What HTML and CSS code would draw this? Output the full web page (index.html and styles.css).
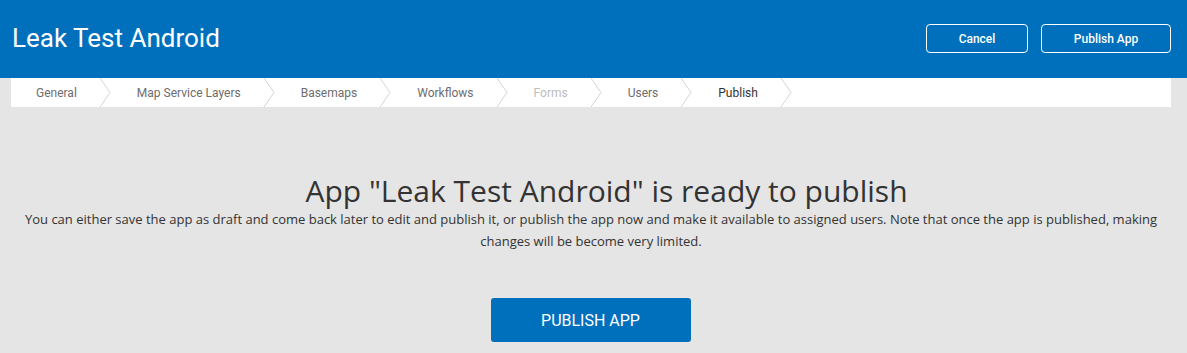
FILE: index.html
```html
<!DOCTYPE html>
<html>
<head>
<meta charset="utf-8">
<link rel="stylesheet" href="styles.css">
</head>
<body>
<header class="topbar">
  <h1 class="app-title">Leak Test Android</h1>
  <div class="top-actions">
    <button class="btn-outline btn-cancel">Cancel</button>
    <button class="btn-outline btn-publish">Publish App</button>
  </div>
</header>
<nav class="steps">
  <div class="step"><span class="step-label">General</span><svg class="chev" width="12" height="29" viewBox="0 0 12 29"><polyline points="1,0 11,14.5 1,29" fill="none" stroke="#d4d4d4" stroke-width="1"/></svg></div>
  <div class="step"><span class="step-label">Map Service Layers</span><svg class="chev" width="12" height="29" viewBox="0 0 12 29"><polyline points="1,0 11,14.5 1,29" fill="none" stroke="#d4d4d4" stroke-width="1"/></svg></div>
  <div class="step"><span class="step-label">Basemaps</span><svg class="chev" width="12" height="29" viewBox="0 0 12 29"><polyline points="1,0 11,14.5 1,29" fill="none" stroke="#d4d4d4" stroke-width="1"/></svg></div>
  <div class="step"><span class="step-label">Workflows</span><svg class="chev" width="12" height="29" viewBox="0 0 12 29"><polyline points="1,0 11,14.5 1,29" fill="none" stroke="#d4d4d4" stroke-width="1"/></svg></div>
  <div class="step step-disabled"><span class="step-label">Forms</span><svg class="chev" width="12" height="29" viewBox="0 0 12 29"><polyline points="1,0 11,14.5 1,29" fill="none" stroke="#d4d4d4" stroke-width="1"/></svg></div>
  <div class="step"><span class="step-label">Users</span><svg class="chev" width="12" height="29" viewBox="0 0 12 29"><polyline points="1,0 11,14.5 1,29" fill="none" stroke="#d4d4d4" stroke-width="1"/></svg></div>
  <div class="step step-active"><span class="step-label">Publish</span><svg class="chev" width="12" height="29" viewBox="0 0 12 29"><polyline points="1,0 11,14.5 1,29" fill="none" stroke="#d4d4d4" stroke-width="1"/></svg></div>
</nav>
<main class="content">
  <h2 class="ready-title">App "Leak Test Android" is ready to publish</h2>
  <p class="ready-text">You can either save the app as draft and come back later to edit and publish it, or publish the app now and make it available to assigned users. Note that once the app is published, making changes will be become very limited.</p>
  <button class="btn-primary">PUBLISH APP</button>
</main>
</body>
</html>
```

FILE: styles.css
```css
html, body {
  margin: 0;
  padding: 0;
}
body {
  background: #e5e5e5;
  font-family: Roboto, "Liberation Sans", sans-serif;
  width: 1187px;
  height: 353px;
  overflow: hidden;
}
.topbar {
  background: #0070bd;
  height: 78px;
  display: flex;
  align-items: flex-start;
  justify-content: space-between;
  padding: 0 16px 0 12px;
  box-sizing: border-box;
}
.app-title {
  margin: 0;
  padding-top: 22px;
  font-family: Roboto, sans-serif;
  font-weight: 400;
  font-size: 26px;
  line-height: 32px;
  color: #fff;
}
.top-actions {
  display: flex;
  gap: 13px;
  padding-top: 24px;
}
.btn-outline {
  height: 29px;
  border: 1px solid #fff;
  border-radius: 4px;
  background: transparent;
  color: #fff;
  font-family: Roboto, sans-serif;
  font-size: 12px;
  font-weight: 500;
  padding: 0;
  box-sizing: border-box;
}
.btn-cancel { width: 102px; }
.btn-publish { width: 130px; }
.steps {
  display: flex;
  background: #fff;
  height: 29px;
  margin: 0 16px 0 11px;
}
.step {
  display: flex;
  align-items: center;
  height: 29px;
  padding-left: 25px;
}
.step + .step { padding-left: 26px; }
.step-label {
  font-size: 12px;
  color: #6d6d6d;
  margin-right: 22px;
}
.step-disabled .step-label { color: #bdbdbd; }
.step-active .step-label { color: #333; }
.chev {
  display: block;
  flex: none;
}
.content {
  display: flex;
  flex-direction: column;
  align-items: center;
  padding-top: 67px;
}
.ready-title {
  margin: 0 0 0 26px;
  font-family: "Open Sans", sans-serif;
  font-weight: 400;
  font-size: 30px;
  line-height: 34px;
  color: #333;
}
.ready-text {
  margin: 0;
  padding: 0 22px 0 17px;
  font-family: "Open Sans", sans-serif;
  font-size: 13px;
  line-height: 22px;
  color: #333;
  text-align: center;
}
.btn-primary {
  margin: 46px 6px 0 0;
  width: 200px;
  height: 44px;
  border: none;
  border-radius: 3px;
  background: #0070bd;
  color: #fff;
  font-family: Roboto, sans-serif;
  font-size: 16px;
  font-weight: 400;
}
```
